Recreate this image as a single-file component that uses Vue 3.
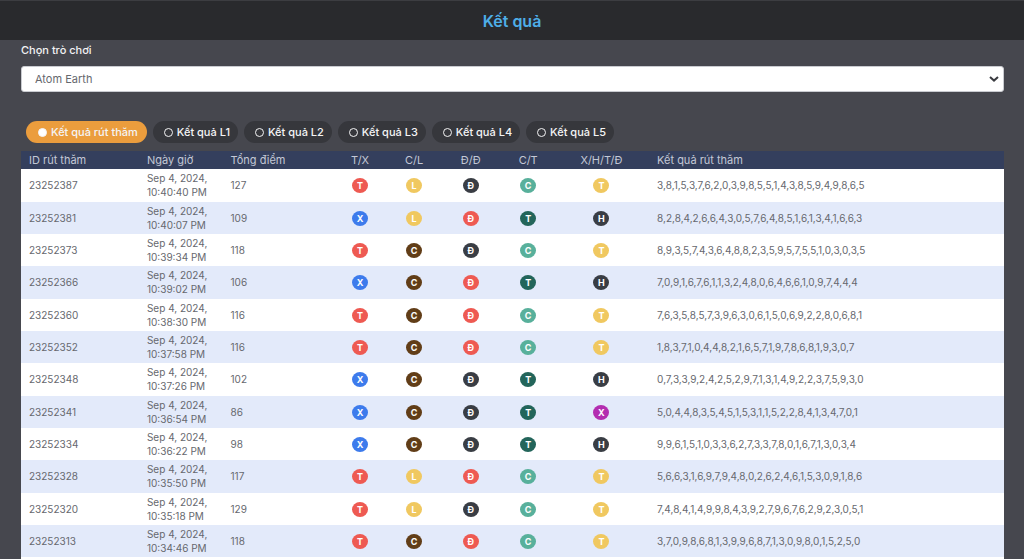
<script setup>
import { ref } from 'vue'

const games = ['Atom Earth']
const game = ref(games[0])

const tabs = ['Kết quả rút thăm', 'Kết quả L1', 'Kết quả L2', 'Kết quả L3', 'Kết quả L4', 'Kết quả L5']
const activeTab = ref(tabs[0])

const columns = ['ID rút thăm', 'Ngày giờ', 'Tổng điểm', 'T/X', 'C/L', 'Đ/Đ', 'C/T', 'X/H/T/Đ', 'Kết quả rút thăm']

const palette = {
  T: ['T', 'red'],
  X: ['X', 'blue'],
  L: ['L', 'yellow'],
  C: ['C', 'brown'],
  D: ['Đ', 'dark'],
  R: ['Đ', 'red'],
  c: ['C', 'mint'],
  t: ['T', 'green'],
  y: ['T', 'yellow'],
  H: ['H', 'dark'],
  x: ['X', 'purple']
}

const rows = [
  ['23252387', '10:40:40 PM', 127, 'TLDcy', '3,8,1,5,3,7,6,2,0,3,9,8,5,5,1,4,3,8,5,9,4,9,8,6,5'],
  ['23252381', '10:40:07 PM', 109, 'XLRtH', '8,2,8,4,2,6,6,4,3,0,5,7,6,4,8,5,1,6,1,3,4,1,6,6,3'],
  ['23252373', '10:39:34 PM', 118, 'TCDcy', '8,9,3,5,7,4,3,6,4,8,8,2,3,5,9,5,7,5,5,1,0,3,0,3,5'],
  ['23252366', '10:39:02 PM', 106, 'XCRtH', '7,0,9,1,6,7,6,1,1,3,2,4,8,0,6,4,6,6,1,0,9,7,4,4,4'],
  ['23252360', '10:38:30 PM', 116, 'TCRcy', '7,6,3,5,8,5,7,3,9,6,3,0,6,1,5,0,6,9,2,2,8,0,6,8,1'],
  ['23252352', '10:37:58 PM', 116, 'TCRcy', '1,8,3,7,1,0,4,4,8,2,1,6,5,7,1,9,7,8,6,8,1,9,3,0,7'],
  ['23252348', '10:37:26 PM', 102, 'XCDtH', '0,7,3,3,9,2,4,2,5,2,9,7,1,3,1,4,9,2,2,3,7,5,9,3,0'],
  ['23252341', '10:36:54 PM', 86, 'XCDtx', '5,0,4,4,8,3,5,4,5,1,5,3,1,1,5,2,2,8,4,1,3,4,7,0,1'],
  ['23252334', '10:36:22 PM', 98, 'XCDtH', '9,9,6,1,5,1,0,3,3,6,2,7,3,3,7,8,0,1,6,7,1,3,0,3,4'],
  ['23252328', '10:35:50 PM', 117, 'TLRcy', '5,6,6,3,1,6,9,7,9,4,8,0,2,6,2,4,6,1,5,3,0,9,1,8,6'],
  ['23252320', '10:35:18 PM', 129, 'TLDcy', '7,4,8,4,1,4,9,9,8,4,3,9,2,7,9,6,7,6,2,9,2,3,0,5,1'],
  ['23252313', '10:34:46 PM', 118, 'TCRcy', '3,7,0,9,8,6,8,1,3,9,9,6,8,7,1,3,0,9,8,0,1,5,2,5,0']
].map(([id, time, total, marks, draw]) => ({
  id, time, total, draw, marks: [...marks].map((key) => palette[key])
}))
</script>

<template>
  <div class="page">
    <header class="topbar"><h1>Kết quả</h1></header>
    <main>
      <label class="field-label" for="game">Chọn trò chơi</label>
      <div class="select-wrap">
        <select id="game" v-model="game">
          <option v-for="name in games" :key="name">{{ name }}</option>
        </select>
        <svg class="chevron" viewBox="0 0 10 6" aria-hidden="true">
          <path d="M1 1 L5 4.6 L9 1" />
        </svg>
      </div>

      <div class="tabs" role="radiogroup" aria-label="Kết quả">
        <label v-for="tab in tabs" :key="tab" class="tab" :class="{ active: tab === activeTab }">
          <input v-model="activeTab" type="radio" name="result" :value="tab">
          <span>{{ tab }}</span>
        </label>
      </div>

      <table>
        <colgroup>
          <col class="w-id"><col class="w-date"><col class="w-total"><col class="w-tx"><col class="w-cl">
          <col class="w-dd"><col class="w-ct"><col class="w-xh"><col>
        </colgroup>
        <thead>
          <tr>
            <th v-for="(name, i) in columns" :key="name" scope="col" :class="{ mid: i > 2 && i < 8 }">{{ name }}</th>
          </tr>
        </thead>
        <tbody>
          <tr v-for="row in rows" :key="row.id">
            <td>{{ row.id }}</td>
            <td>Sep 4, 2024,<br>{{ row.time }}</td>
            <td>{{ row.total }}</td>
            <td v-for="([letter, tone], i) in row.marks" :key="i" class="mid">
              <span class="badge" :class="tone">{{ letter }}</span>
            </td>
            <td class="draw">{{ row.draw }}</td>
          </tr>
        </tbody>
      </table>
    </main>
  </div>
</template>

<style>
body {
  background: #46474e;
}
</style>

<style scoped>
.page {
  font-family: Inter, "Noto Sans", sans-serif;
  font-size: 10px;
  color: #66686e;
  background: #46474e;
}

.topbar {
  height: 40px;
  box-sizing: border-box;
  border-top: 1px solid #3c3d41;
  background: #292a2d;
  display: flex;
  align-items: center;
  justify-content: center;
}

h1 {
  margin: 0;
  font-size: 16px;
  line-height: 22px;
  font-weight: 600;
  color: #4eaee8;
}

main {
  padding: 0 20px 0 21px;
}

.field-label {
  display: block;
  padding: 3px 0 8px;
  font-size: 11px;
  line-height: 15px;
  font-weight: 500;
  color: #f2f2f4;
}

.select-wrap {
  position: relative;
}

select {
  display: block;
  width: 100%;
  height: 26px;
  padding: 0 13px;
  appearance: none;
  border: 1px solid #c9cbd0;
  border-radius: 3px;
  background: #fff;
  color: #66686e;
  font-family: inherit;
  font-size: 11px;
}

.chevron {
  position: absolute;
  right: 5px;
  top: 10px;
  width: 10px;
  height: 6px;
  fill: none;
  stroke: #3a3b40;
  stroke-width: 2;
  pointer-events: none;
}

.tabs {
  display: flex;
  gap: 6px;
  padding: 29px 5px 8px;
}

.tab {
  display: flex;
  align-items: center;
  gap: 4px;
  height: 22px;
  padding: 0 8px 0 11px;
  border-radius: 11px;
  background: #36373c;
  color: #f4f4f5;
  font-size: 11px;
  font-weight: 500;
  white-space: nowrap;
}

.tab.active {
  padding: 0 9px 0 12px;
  background: #eb9d3d;
}

.tab input {
  appearance: none;
  box-sizing: border-box;
  width: 9px;
  height: 9px;
  margin: 0;
  border: 1px solid #f4f4f5;
  border-radius: 50%;
}

.tab input:checked {
  background: #fff;
}

table {
  width: 100%;
  table-layout: fixed;
  border-collapse: separate;
  border-spacing: 0;
  border-bottom: 2px solid #fff;
}

.w-id { width: 12%; }
.w-date { width: 8.5%; }
.w-total { width: 11%; }
.w-tx { width: 6%; }
.w-cl { width: 5%; }
.w-dd { width: 6.5%; }
.w-ct { width: 5.2%; }
.w-xh { width: 9.7%; }

th {
  height: 18px;
  padding: 0 8px;
  background: #343f5d;
  color: #c3c8d6;
  font-size: 11px;
  line-height: 18px;
  font-weight: 400;
  text-align: left;
  white-space: nowrap;
}

td {
  padding: 2px 8px;
  background: #fff;
  line-height: 14px;
}

tbody tr:nth-child(3n + 1) td {
  padding-bottom: 3px;
}

tbody tr:nth-child(even) td {
  background: #e3eafa;
}

th.mid,
td.mid {
  padding-left: 0;
  padding-right: 0;
  text-align: center;
}

.draw {
  white-space: nowrap;
}

.badge {
  display: block;
  width: 16px;
  height: 15px;
  margin: 0 auto;
  border-radius: 50%;
  color: #fff;
  font-size: 9px;
  line-height: 15px;
  font-weight: 700;
}

.red { background: #ee5a52; }
.blue { background: #3d7bec; }
.yellow { background: #f0c860; }
.brown { background: #613d17; }
.dark { background: #393d44; }
.mint { background: #58b09b; }
.green { background: #23655a; }
.purple { background: #b32db0; }
</style>
